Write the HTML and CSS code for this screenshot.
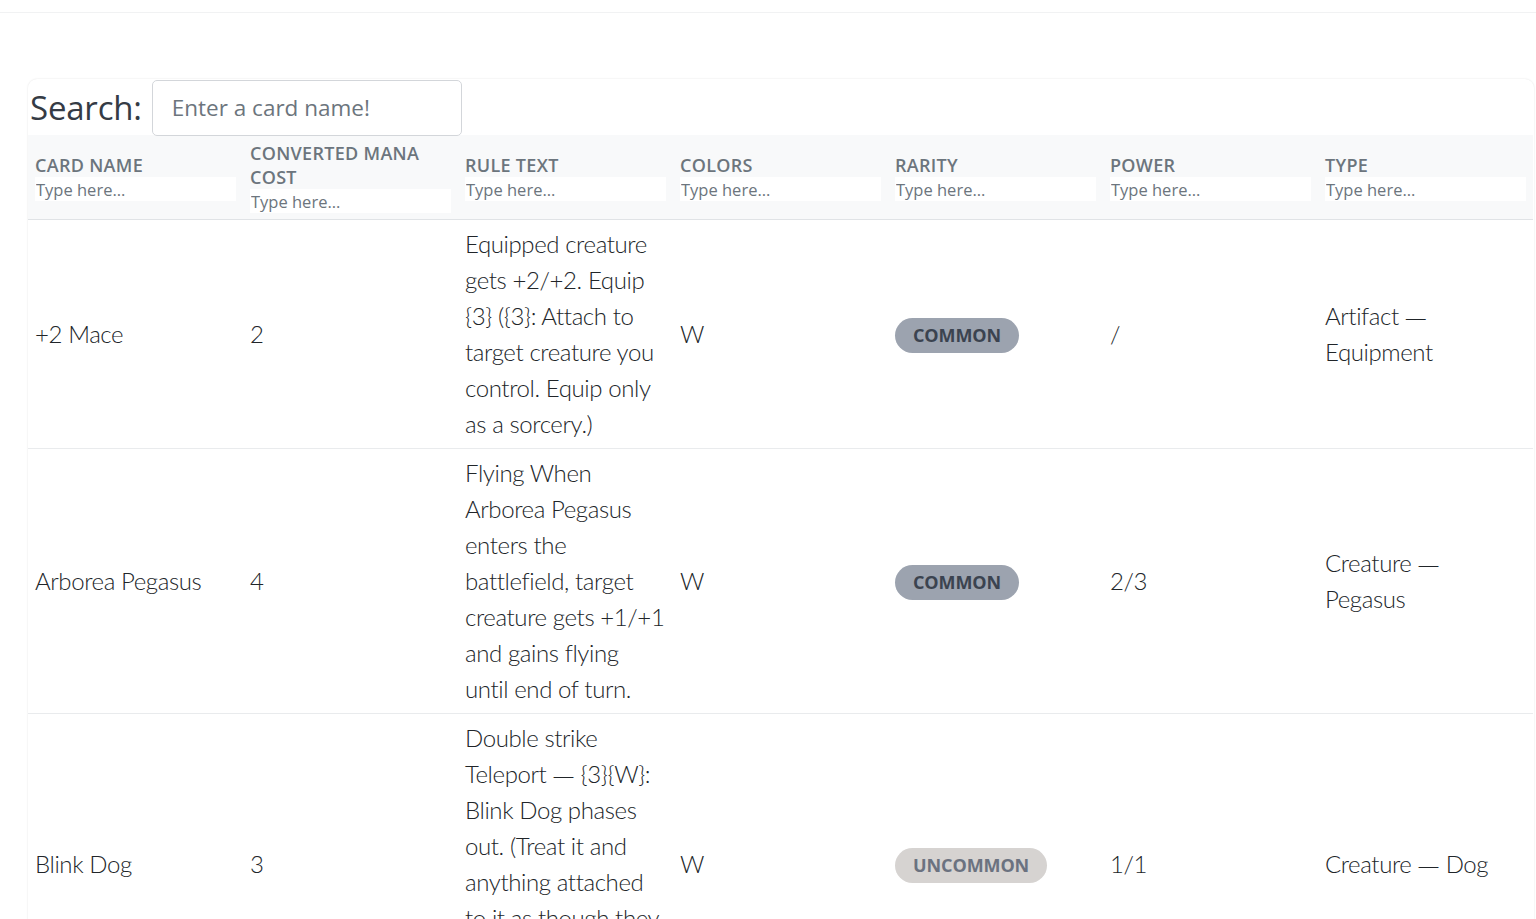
FILE: index.html
```html
<!DOCTYPE html>
<html lang="en">
<head>
<meta charset="utf-8">
<title>Card Search</title>
<link rel="stylesheet" href="styles.css">
</head>
<body>
<div class="topbar"></div>
<main class="card">
  <div class="search-row">
    <label class="search-label" for="search">Search:</label>
    <input id="search" class="search-input" type="text" placeholder="Enter a card name!">
  </div>
  <table class="cards">
    <thead>
      <tr>
        <th><div class="th-label">Card Name</div><input class="filter" placeholder="Type here..."></th>
        <th><div class="th-label">Converted Mana Cost</div><input class="filter" placeholder="Type here..."></th>
        <th><div class="th-label">Rule Text</div><input class="filter" placeholder="Type here..."></th>
        <th><div class="th-label">Colors</div><input class="filter" placeholder="Type here..."></th>
        <th><div class="th-label">Rarity</div><input class="filter" placeholder="Type here..."></th>
        <th><div class="th-label">Power</div><input class="filter" placeholder="Type here..."></th>
        <th><div class="th-label">Type</div><input class="filter" placeholder="Type here..."></th>
      </tr>
    </thead>
    <tbody>
      <tr>
        <td>+2 Mace</td>
        <td>2</td>
        <td class="rule">Equipped creature gets +2/+2. Equip {3} ({3}: Attach to target creature you control. Equip only as a sorcery.)</td>
        <td>W</td>
        <td><span class="badge badge-common">Common</span></td>
        <td>/</td>
        <td class="type">Artifact <span class="dash">—</span> Equipment</td>
      </tr>
      <tr>
        <td>Arborea Pegasus</td>
        <td>4</td>
        <td class="rule">Flying When Arborea Pegasus enters the battlefield, target creature gets +1/+1 and gains flying until end of turn.</td>
        <td>W</td>
        <td><span class="badge badge-common">Common</span></td>
        <td>2/3</td>
        <td class="type">Creature <span class="dash">—</span> Pegasus</td>
      </tr>
      <tr>
        <td>Blink Dog</td>
        <td>3</td>
        <td class="rule">Double strike Teleport <span class="dash">—</span> {3}{W}: Blink Dog phases out. (Treat it and anything attached to it as though they don't exist until your next turn.)</td>
        <td>W</td>
        <td><span class="badge badge-uncommon">Uncommon</span></td>
        <td>1/1</td>
        <td class="type">Creature <span class="dash">—</span> Dog</td>
      </tr>
    </tbody>
  </table>
</main>
</body>
</html>
```

FILE: styles.css
```css
html, body {
  margin: 0;
  padding: 0;
  background: #ffffff;
}

body {
  font-family: "Lato", "Open Sans", sans-serif;
  color: #212529;
}

.topbar {
  height: 12px;
  border-bottom: 1px solid #f1f2f3;
}

.card {
  margin: 66px 0 0 28px;
  width: 1506px;
  border-radius: 9px;
  box-shadow: 0 0 2px rgba(0, 0, 0, 0.12);
  background: #fff;
  overflow: hidden;
}

.search-row {
  display: flex;
  align-items: center;
  height: 56px;
  padding-left: 2px;
}

.search-label {
  font-family: "Open Sans", sans-serif;
  font-size: 33px;
  font-weight: 400;
  color: #353b45;
  margin-right: 10px;
  letter-spacing: -0.2px;
}

.search-input {
  box-sizing: border-box;
  width: 310px;
  height: 56px;
  margin-top: 1px;
  border: 1px solid #d3d6da;
  border-radius: 5px;
  padding: 0 19px;
  font-family: "Open Sans", sans-serif;
  font-size: 22.5px;
  color: #495057;
  outline: none;
}

.search-input::placeholder {
  color: #6c757d;
}

.cards {
  width: 1505px;
  border-collapse: collapse;
  table-layout: fixed;
}

.cards thead tr {
  background: #f8f9fa;
  border-bottom: 1px solid #e0e3e6;
}

.cards th {
  text-align: left;
  vertical-align: middle;
  padding: 6px 7px;
  height: 72px;
}

.th-label {
  font-family: "Open Sans", sans-serif;
  font-size: 18px;
  font-weight: 600;
  line-height: 24px;
  letter-spacing: 0.3px;
  text-transform: uppercase;
  color: #6c757d;
}

.filter {
  display: block;
  box-sizing: border-box;
  width: 100%;
  height: 24px;
  border: none;
  padding: 0 1px;
  background: #fff;
  font-family: "Open Sans", sans-serif;
  font-size: 16.5px;
  color: #495057;
  outline: none;
}

.filter::placeholder {
  color: #6c757d;
}

.cards tbody tr {
  border-bottom: 1px solid #e9ebed;
}

.cards td {
  padding: 6px 7px;
  vertical-align: middle;
  font-size: 24px;
  font-weight: 300;
  line-height: 36px;
  letter-spacing: -0.4px;
  color: #212529;
}

.cards td.rule {
  padding-right: 7px;
}

.cards td.type {
  padding-right: 14px;
}

.dash {
  font-family: "DejaVu Sans", sans-serif;
  font-weight: 300;
  font-size: 22px;
  line-height: 1;
  letter-spacing: 0;
}

.badge {
  display: inline-block;
  padding: 0 18px;
  height: 35px;
  line-height: 35px;
  border-radius: 18px;
  font-family: "Open Sans", sans-serif;
  font-size: 18px;
  font-weight: 700;
  letter-spacing: -0.1px;
  text-transform: uppercase;
  vertical-align: middle;
}

.badge-common {
  background: #9ca3af;
  color: #3b4350;
}

.badge-uncommon {
  background: #d6d3d1;
  color: #6b7280;
}
```
